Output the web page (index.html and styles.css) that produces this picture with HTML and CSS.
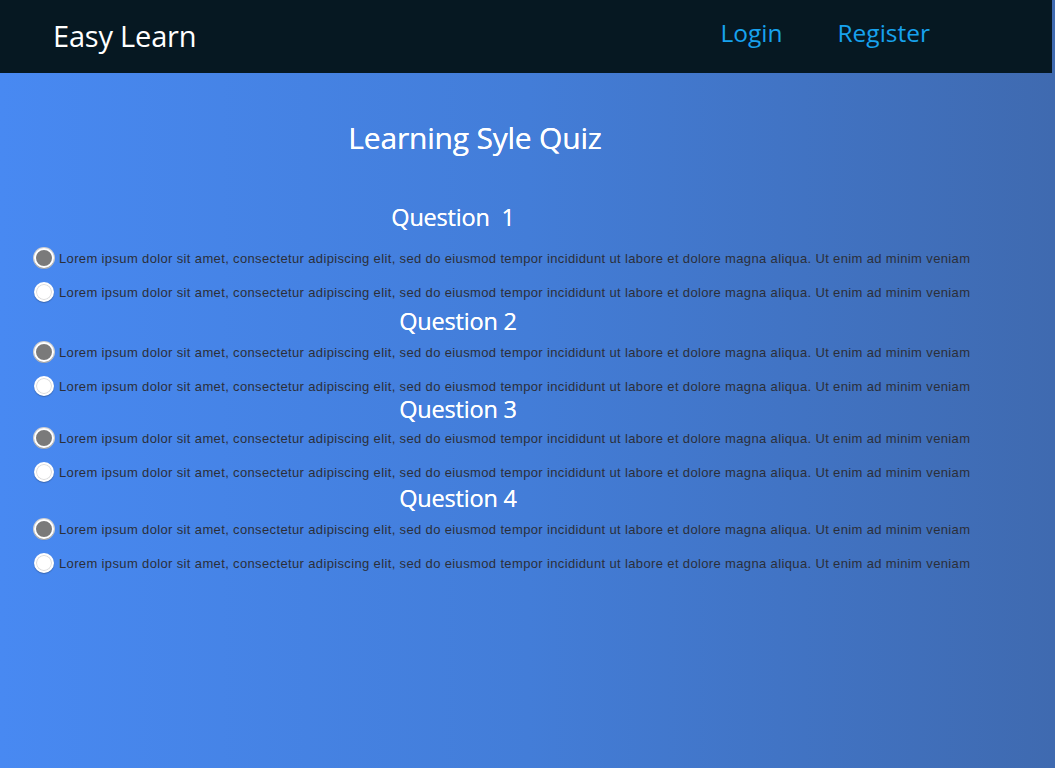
FILE: index.html
```html
<!DOCTYPE html>
<html lang="en">
<head>
<meta charset="utf-8">
<title>Easy Learn - Learning Style Quiz</title>
<link rel="stylesheet" href="styles.css">
</head>
<body>
<header class="topbar">
  <div class="brand">Easy Learn</div>
  <nav class="nav">
    <a href="#" class="nav-link">Login</a>
    <a href="#" class="nav-link">Register</a>
  </nav>
</header>
<main class="page">
  <h1 class="title">Learning Syle Quiz</h1>
  <form class="quiz">
    <section class="question q1">
      <h2 class="q-title">Question&nbsp; 1</h2>
      <label class="option"><span class="radio checked"></span><span class="opt-text">Lorem ipsum dolor sit amet, consectetur adipiscing elit, sed do eiusmod tempor incididunt ut labore et dolore magna aliqua. Ut enim ad minim veniam</span></label>
      <label class="option"><span class="radio"></span><span class="opt-text">Lorem ipsum dolor sit amet, consectetur adipiscing elit, sed do eiusmod tempor incididunt ut labore et dolore magna aliqua. Ut enim ad minim veniam</span></label>
    </section>
    <section class="question q2">
      <h2 class="q-title">Question 2</h2>
      <label class="option"><span class="radio checked"></span><span class="opt-text">Lorem ipsum dolor sit amet, consectetur adipiscing elit, sed do eiusmod tempor incididunt ut labore et dolore magna aliqua. Ut enim ad minim veniam</span></label>
      <label class="option"><span class="radio"></span><span class="opt-text">Lorem ipsum dolor sit amet, consectetur adipiscing elit, sed do eiusmod tempor incididunt ut labore et dolore magna aliqua. Ut enim ad minim veniam</span></label>
    </section>
    <section class="question q3">
      <h2 class="q-title">Question 3</h2>
      <label class="option"><span class="radio checked"></span><span class="opt-text">Lorem ipsum dolor sit amet, consectetur adipiscing elit, sed do eiusmod tempor incididunt ut labore et dolore magna aliqua. Ut enim ad minim veniam</span></label>
      <label class="option"><span class="radio"></span><span class="opt-text">Lorem ipsum dolor sit amet, consectetur adipiscing elit, sed do eiusmod tempor incididunt ut labore et dolore magna aliqua. Ut enim ad minim veniam</span></label>
    </section>
    <section class="question q4">
      <h2 class="q-title">Question 4</h2>
      <label class="option"><span class="radio checked"></span><span class="opt-text">Lorem ipsum dolor sit amet, consectetur adipiscing elit, sed do eiusmod tempor incididunt ut labore et dolore magna aliqua. Ut enim ad minim veniam</span></label>
      <label class="option"><span class="radio"></span><span class="opt-text">Lorem ipsum dolor sit amet, consectetur adipiscing elit, sed do eiusmod tempor incididunt ut labore et dolore magna aliqua. Ut enim ad minim veniam</span></label>
    </section>
  </form>
</main>
</body>
</html>
```

FILE: styles.css
```css
html, body {
  margin: 0;
  padding: 0;
  height: 100%;
}
body {
  background: linear-gradient(to right, #4889f2 0%, #437dd8 50%, #3f6ab0 100%);
  font-family: "Open Sans", "DejaVu Sans", sans-serif;
  overflow: hidden;
}
.topbar {
  height: 73px;
  width: 1052px;
  background: #061822;
  display: flex;
  align-items: center;
  justify-content: space-between;
  box-sizing: border-box;
  padding: 0 122px 0 53px;
}
.brand {
  color: #ffffff;
  font-size: 29px;
  letter-spacing: -0.2px;
  margin-top: -3px;
}
.nav {
  display: flex;
  gap: 55px;
  margin-top: -9px;
}
.nav-link {
  color: #17a2ee;
  text-decoration: none;
  font-size: 24.5px;
}
.page {
  display: flex;
  flex-direction: column;
}
.title {
  width: 950px;
  margin: 45px 0 0;
  text-align: center;
  color: #ffffff;
  font-weight: 400;
  font-size: 30px;
  line-height: 40px;
  letter-spacing: -0.2px;
  text-shadow: 0 0 0.4px #ffffff;
}
.quiz {
  display: flex;
  flex-direction: column;
  margin-top: 44px;
}
.question {
  display: flex;
  flex-direction: column;
}
.q-title {
  width: 916px;
  margin: 0;
  text-align: center;
  color: #ffffff;
  font-weight: 400;
  font-size: 23.5px;
  line-height: 30px;
  letter-spacing: -0.2px;
  text-shadow: 0 0 0.4px #ffffff;
}
.q1 .q-title {
  width: 906px;
  margin-bottom: 9px;
}
.q2 { margin-top: -3px; }
.q2 .q-title { margin-bottom: -1px; }
.q3 { margin-top: -9px; }
.q3 .q-title { margin-bottom: -3px; }
.q4 { margin-top: -6px; }
.q4 .q-title { margin-bottom: -1px; }
.option {
  display: flex;
  align-items: center;
  gap: 5px;
  height: 34px;
  padding-left: 34px;
}
.radio {
  width: 16px;
  height: 16px;
  border-radius: 50%;
  background: #ffffff;
  border: 2px solid #ffffff;
  box-shadow: 0 1px 1px rgba(0, 0, 0, 0.25), inset 0 0 0 1px #dcdcdc;
  flex: none;
}
.radio.checked {
  background: #7a7a7a;
  box-shadow: 0 1px 1px rgba(0, 0, 0, 0.25), 0 0 0 1px #cfcfcf;
}
.opt-text {
  color: #2b2f3a;
  font-family: "Liberation Sans", sans-serif;
  font-size: 13px;
  letter-spacing: 0.36px;
  white-space: nowrap;
}
```
